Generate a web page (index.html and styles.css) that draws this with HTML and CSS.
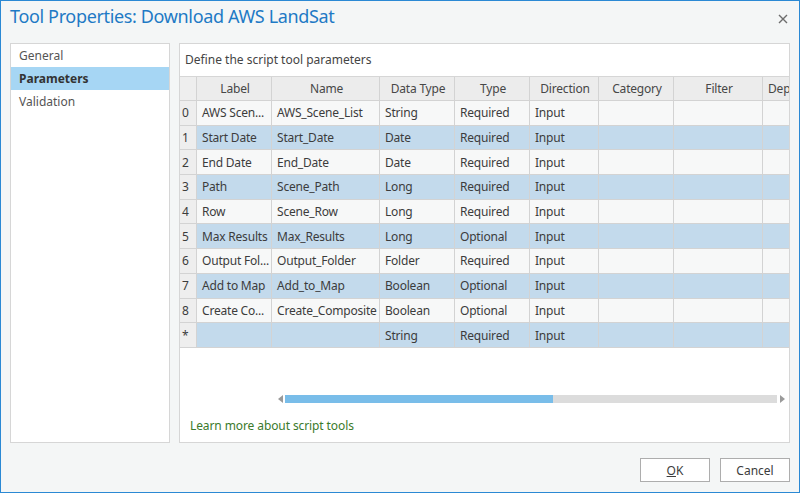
FILE: index.html
```html
<!DOCTYPE html>
<html>
<head>
<meta charset="utf-8">
<link rel="stylesheet" href="styles.css">
</head>
<body>
<div class="window">
  <div class="titlebar">
    <h1 class="title">Tool Properties: Download AWS LandSat</h1>
    <svg class="close" width="10" height="10" viewBox="0 0 10 10"><path d="M1 1 L9 9 M9 1 L1 9" stroke="#6d6d6d" stroke-width="1.4" fill="none"/></svg>
  </div>
  <div class="content">
    <nav class="sidenav">
      <div class="nav-item">General</div>
      <div class="nav-item active">Parameters</div>
      <div class="nav-item">Validation</div>
    </nav>
    <section class="panel">
      <div class="panel-head">Define the script tool parameters</div>
      <div class="grid-wrap">
        <div class="row head">
          <div class="cell idx"></div><div class="cell">Label</div><div class="cell">Name</div><div class="cell">Data Type</div><div class="cell">Type</div><div class="cell">Direction</div><div class="cell">Category</div><div class="cell">Filter</div><div class="cell">Dependency</div>
        </div>
        <div class="row even"><div class="cell idx">0</div><div class="cell">AWS Scen...</div><div class="cell">AWS_Scene_List</div><div class="cell">String</div><div class="cell">Required</div><div class="cell">Input</div><div class="cell"></div><div class="cell"></div><div class="cell"></div></div>
        <div class="row odd"><div class="cell idx">1</div><div class="cell">Start Date</div><div class="cell">Start_Date</div><div class="cell">Date</div><div class="cell">Required</div><div class="cell">Input</div><div class="cell"></div><div class="cell"></div><div class="cell"></div></div>
        <div class="row even"><div class="cell idx">2</div><div class="cell">End Date</div><div class="cell">End_Date</div><div class="cell">Date</div><div class="cell">Required</div><div class="cell">Input</div><div class="cell"></div><div class="cell"></div><div class="cell"></div></div>
        <div class="row odd"><div class="cell idx">3</div><div class="cell">Path</div><div class="cell">Scene_Path</div><div class="cell">Long</div><div class="cell">Required</div><div class="cell">Input</div><div class="cell"></div><div class="cell"></div><div class="cell"></div></div>
        <div class="row even"><div class="cell idx">4</div><div class="cell">Row</div><div class="cell">Scene_Row</div><div class="cell">Long</div><div class="cell">Required</div><div class="cell">Input</div><div class="cell"></div><div class="cell"></div><div class="cell"></div></div>
        <div class="row odd"><div class="cell idx">5</div><div class="cell">Max Results</div><div class="cell">Max_Results</div><div class="cell">Long</div><div class="cell">Optional</div><div class="cell">Input</div><div class="cell"></div><div class="cell"></div><div class="cell"></div></div>
        <div class="row even"><div class="cell idx">6</div><div class="cell">Output Fol...</div><div class="cell">Output_Folder</div><div class="cell">Folder</div><div class="cell">Required</div><div class="cell">Input</div><div class="cell"></div><div class="cell"></div><div class="cell"></div></div>
        <div class="row odd"><div class="cell idx">7</div><div class="cell">Add to Map</div><div class="cell">Add_to_Map</div><div class="cell">Boolean</div><div class="cell">Optional</div><div class="cell">Input</div><div class="cell"></div><div class="cell"></div><div class="cell"></div></div>
        <div class="row even"><div class="cell idx">8</div><div class="cell">Create Co...</div><div class="cell">Create_Composite</div><div class="cell">Boolean</div><div class="cell">Optional</div><div class="cell">Input</div><div class="cell"></div><div class="cell"></div><div class="cell"></div></div>
        <div class="row odd"><div class="cell idx">*</div><div class="cell"></div><div class="cell"></div><div class="cell">String</div><div class="cell">Required</div><div class="cell">Input</div><div class="cell"></div><div class="cell"></div><div class="cell"></div></div>
      </div>
      <div class="hscroll">
        <span class="arrow left"></span>
        <div class="track"><div class="thumb"></div></div>
        <span class="arrow right"></span>
      </div>
      <a class="learn">Learn more about script tools</a>
    </section>
  </div>
  <div class="footer">
    <button class="btn"><u>O</u>K</button>
    <button class="btn">Cancel</button>
  </div>
</div>
</body>
</html>
```

FILE: styles.css
```css
* { box-sizing: border-box; }
html, body { margin: 0; padding: 0; }
body {
  font-family: "Noto Sans", "Open Sans", sans-serif;
  font-size: 12px;
  color: #3a3a3a;
}
.window {
  width: 800px;
  height: 493px;
  border: 1px solid #2b89d4;
  background: #f4f6f6;
  display: flex;
  flex-direction: column;
  overflow: hidden;
}
.titlebar {
  height: 42px;
  display: flex;
  justify-content: space-between;
  align-items: flex-start;
  padding: 3px 11px 0 9px;
}
.title {
  margin: 0;
  font-size: 18px;
  line-height: 24px;
  font-weight: 400;
  color: #1e7ac5;
  letter-spacing: -0.35px;
}
.close { margin-top: 10px; }
.content {
  height: 400px;
  display: flex;
  gap: 9px;
  padding: 0 9px;
}
.sidenav {
  width: 160px;
  background: #fff;
  border: 1px solid #d6d6d6;
}
.nav-item {
  height: 23px;
  line-height: 23px;
  padding-left: 8px;
  color: #555;
  font-size: 12px;
}
.nav-item.active {
  background: #a6d6f4;
  color: #333;
  font-weight: 700;
}
.panel {
  flex: 1;
  background: #fff;
  border: 1px solid #d6d6d6;
  display: flex;
  flex-direction: column;
  min-width: 0;
}
.panel-head {
  height: 33px;
  line-height: 32px;
  padding-left: 5px;
  border-bottom: 1px solid #d6d6d6;
  color: #444;
}
.grid-wrap {
  overflow: hidden;
  width: 100%;
}
.row {
  display: grid;
  grid-template-columns: 17px 75px 108px 75px 75px 69px 75px 89px 90px;
  height: 24.7px;
  width: max-content;
  letter-spacing: -0.2px;
}
.row.head { height: 24px; background: #ececec; }
.row.even { background: #f7f8f8; }
.row.odd { background: #c3daec; }
.cell {
  border-right: 1px solid #d3d3d3;
  border-bottom: 1px solid #d3d3d3;
  padding: 0 3px 0 5px;
  display: flex;
  align-items: center;
  white-space: nowrap;
  overflow: hidden;
  color: #3c3c3c;
}
.row.head .cell { justify-content: center; color: #474747; }
.row.head .cell:last-child { justify-content: flex-start; padding-left: 5px; }
.cell.idx {
  background: #eeeeee;
  padding: 0 2px;
  justify-content: flex-start;
}
.hscroll {
  margin: 47px 0 0 98px;
  width: 507px;
  height: 8px;
  display: flex;
  align-items: center;
}
.arrow {
  width: 0;
  height: 0;
  border-top: 4px solid transparent;
  border-bottom: 4px solid transparent;
}
.arrow.left { border-right: 5px solid #9a9a9a; margin-right: 2px; }
.arrow.right { border-left: 5px solid #9a9a9a; margin-left: 3px; }
.track {
  flex: 1;
  height: 8px;
  background: #dcdcdc;
}
.thumb {
  width: 268px;
  height: 8px;
  background: #79bde9;
}
.learn {
  margin: 15px 0 0 10px;
  line-height: 16px;
  color: #3b7a2c;
  font-size: 12px;
  letter-spacing: -0.1px;
}
.footer {
  flex: 1;
  display: flex;
  justify-content: flex-end;
  gap: 10px;
  padding: 15px 9px 0 0;
}
.btn {
  width: 70px;
  height: 24px;
  background: #fff;
  border: 1px solid #adadad;
  font-family: "Noto Sans", "Open Sans", sans-serif;
  font-size: 12px;
  color: #3c3c3c;
  padding: 0;
}
```
